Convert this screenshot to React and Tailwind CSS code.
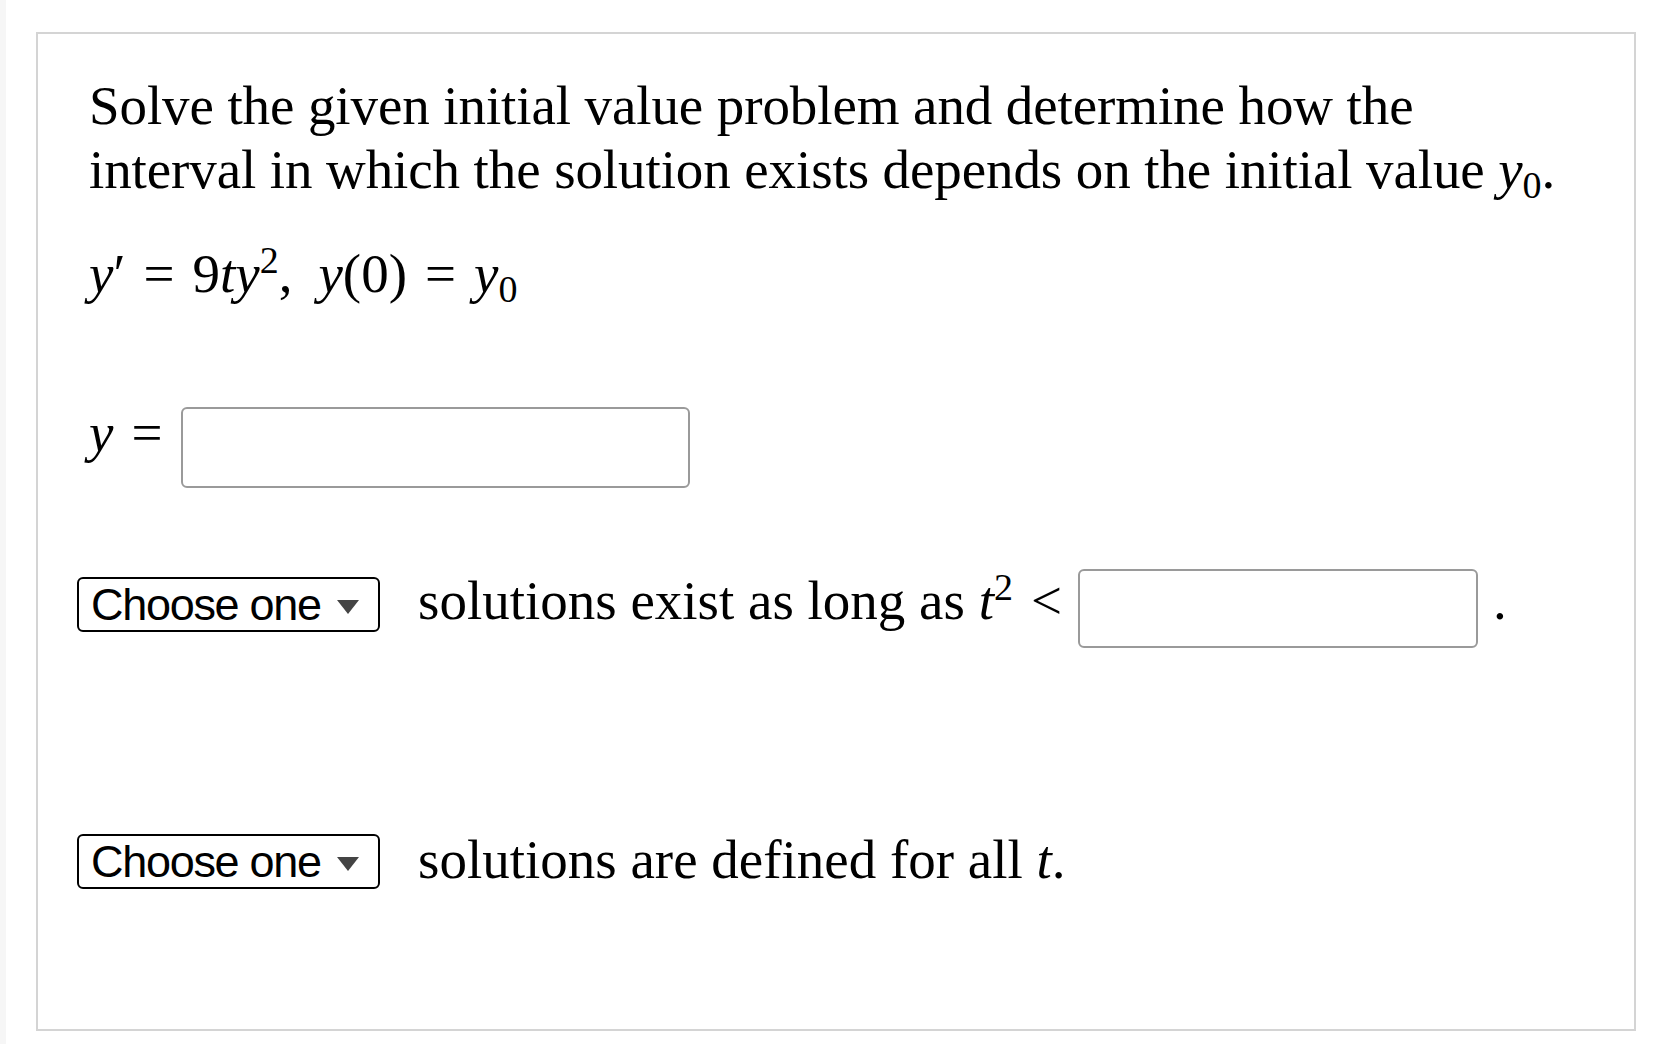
import React from "react";

const serif = { fontFamily: '"Liberation Serif", "Times New Roman", serif' };

const Caret = () => (
  <svg width="22" height="14" viewBox="0 0 22 14" className="shrink-0">
    <polygon points="0,0 22,0 11,14" fill="#444444" />
  </svg>
);

const ChooseOne = ({ className = "" }) => (
  <div
    className={`-ml-[12px] flex h-[55px] w-[303px] shrink-0 items-center rounded-[6px] border-2 border-black bg-white pl-[12px] text-[45px] leading-none text-black ${className}`}
    style={{ fontFamily: '"Liberation Sans", Arial, sans-serif' }}
  >
    <span className="tracking-[-1.3px]">Choose one</span>
    <span className="ml-[16px] mt-[4px]">
      <Caret />
    </span>
  </div>
);

const AnswerBox = ({ className }) => (
  <div className={`shrink-0 rounded-[6px] border-2 border-[#9a9a9a] bg-white ${className}`} />
);

export default function App() {
  return (
    <div className="flex min-h-screen bg-white text-black" style={serif}>
      {/* faint gutter on the left edge */}
      <div className="w-[6px] shrink-0 bg-[#f6f6f6]" />

      <div className="flex-1 pl-[30px] pr-[18px] pt-[32px] pb-[13px]">
        <div className="h-[999px] border-2 border-[#d4d4d4] pl-[51px] pt-[40px]">
          {/* Question */}
          <p className="whitespace-nowrap text-[55px] leading-[64px] tracking-[-0.1px]">
            Solve the given initial value problem and determine how the
            <br />
            interval in which the solution exists depends on the initial value{" "}
            <i>y</i>
            <sub className="text-[38px]">0</sub>.
          </p>

          {/* y' = 9ty^2, y(0) = y0 */}
          <div className="mt-[40px] flex h-[64px] items-baseline whitespace-nowrap text-[55px] leading-[64px]">
            <i>y</i>
            <span>′</span>
            <span className="mx-[18px]">=</span>
            <span>9</span>
            <i>ty</i>
            <sup className="text-[38px]">2</sup>
            <span>,</span>
            <i className="ml-[26px]">y</i>
            <span>(0)</span>
            <span className="mx-[18px]">=</span>
            <i>y</i>
            <sub className="text-[38px]">0</sub>
          </div>

          {/* y = [ ] */}
          <div className="mt-[101px] flex h-[81px] items-center">
            <div className="mb-[29px] whitespace-nowrap text-[55px] leading-[64px]">
              <i>y</i>
              <span className="ml-[18px]">=</span>
            </div>
            <AnswerBox className="ml-[19px] h-[81px] w-[509px]" />
          </div>

          {/* Choose one ... t^2 < [ ] . */}
          <div className="mt-[81px] flex h-[79px] items-center">
            <ChooseOne className="mb-[8px]" />
            <div className="mb-[15px] ml-[38px] whitespace-nowrap text-[55px] leading-[64px]">
              solutions exist as long as <i>t</i>
              <sup className="text-[38px]">2</sup>
              <span className="ml-[18px]">&lt;</span>
            </div>
            <AnswerBox className="ml-[16px] h-[79px] w-[400px]" />
            <span className="mb-[15px] ml-[15px] text-[55px] leading-[64px]">.</span>
          </div>

          {/* Choose one ... defined for all t */}
          <div className="mt-[186px] flex h-[55px] items-center">
            <ChooseOne />
            <div className="mb-[4px] ml-[38px] whitespace-nowrap text-[55px] leading-[64px]">
              solutions are defined for all <i>t</i>.
            </div>
          </div>
        </div>
      </div>
    </div>
  );
}
